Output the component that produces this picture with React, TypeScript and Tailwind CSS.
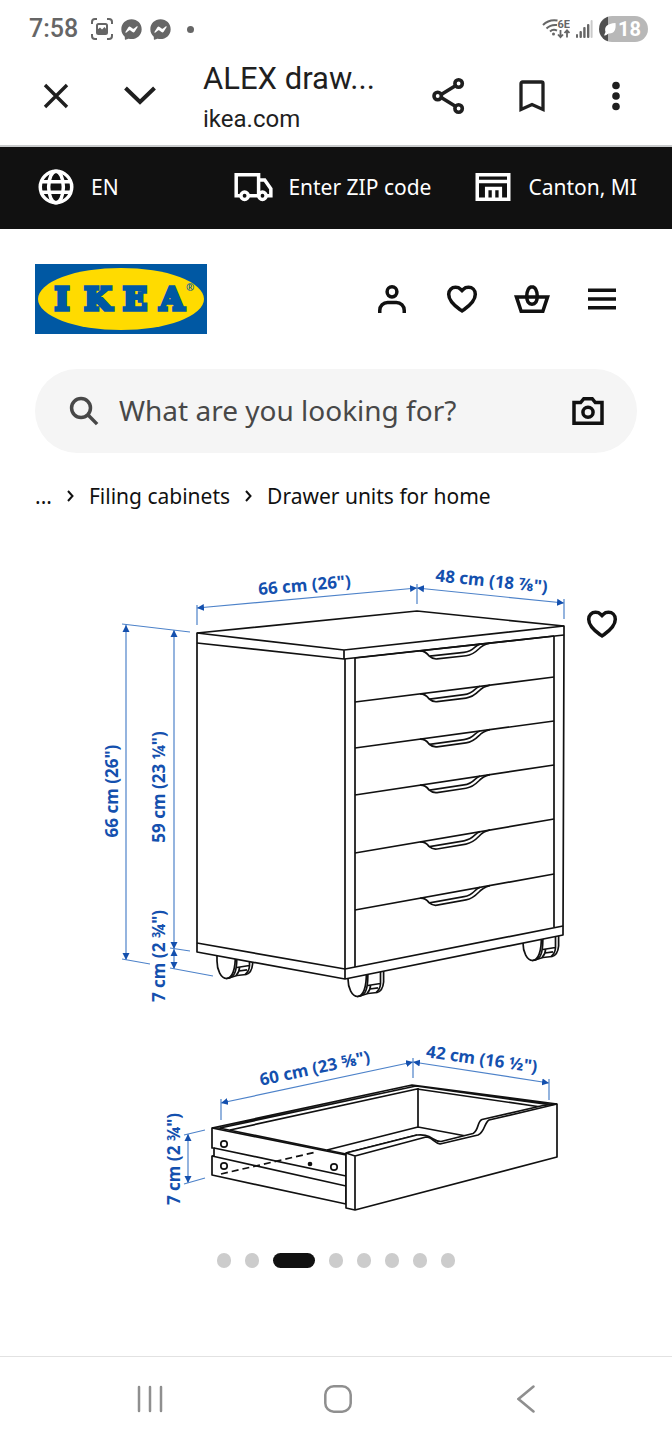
import type { ReactNode } from 'react';
import { FaFacebookMessenger } from 'react-icons/fa';

interface IconProps {
  children: ReactNode;
  className?: string;
}

interface Point {
  x: number;
  y: number;
}

const drawerRows = [
  { left: 658, right: 636 },
  { left: 702, right: 677 },
  { left: 748, right: 721 },
  { left: 795, right: 765 },
  { left: 853, right: 819 },
  { left: 910, right: 874 },
];

const slides = [1, 2, 3, 4, 5, 6, 7, 8];
const activeSlide = 3;

function Icon({ children, className = 'size-[42px]' }: IconProps) {
  return (
    <svg
      viewBox="0 0 24 24"
      className={className}
      fill="none"
      stroke="currentColor"
      strokeWidth="2"
      aria-hidden="true"
    >
      {children}
    </svg>
  );
}

function HeartIcon() {
  return (
    <Icon>
      <path d="M12 18.800l-1.200-.8C7.400 15.600 4.400 12.700 4.400 9.300c0-2.400 1.700-4 3.900-4 1.200 0 2.200.4 2.900 1.100l.8.800.8-.8c.7-.7 1.700-1.100 2.900-1.100 2.200 0 3.900 1.600 3.900 4 0 3.400-3 6.300-6.400 8.700z" />
    </Icon>
  );
}

function StatusBar() {
  return (
    <div className="flex h-[54px] items-center pt-1 pr-6 pl-[29px] text-[#666]">
      <span className="text-[25px] leading-7 font-medium">7:58</span>
      <svg viewBox="0 0 22 22" className="ml-[13px] size-[22px]" fill="none" stroke="currentColor" strokeWidth="2">
        <path d="M1 6V4a3 3 0 0 1 3-3h2M16 1h2a3 3 0 0 1 3 3v2M21 16v2a3 3 0 0 1-3 3h-2M6 21H4a3 3 0 0 1-3-3v-2" />
        <rect x="6" y="6" width="10" height="10" rx="1.500" />
        <path d="M6 15v-3l3-2.500 2 2L13.500 9l2.500 3v3z" fill="currentColor" stroke="none" />
      </svg>
      <FaFacebookMessenger className="ml-2 size-[21px]" />
      <FaFacebookMessenger className="ml-2 size-[21px]" />
      <span className="ml-4 size-[7px] rounded-full bg-[#666]" />
      <div className="ml-auto flex items-center gap-[6px]">
        <svg viewBox="0 0 28 22" className="h-[22px] w-[28px]" fill="none" stroke="currentColor" strokeWidth="2">
          <path d="M1 7C4.500 3.500 10 1.500 15.500 2.500" />
          <path d="M4.500 10.500C7.500 7.500 11 6.500 15 7" />
          <path d="M8 13.500c2-1.800 4.500-2.200 7-.9" />
          <circle cx="11.500" cy="16" r="1.500" fill="currentColor" stroke="none" />
          <text x="15.500" y="10" fontSize="11" fontWeight="700" fill="currentColor" stroke="none">
            6E
          </text>
          <path d="M18.500 12v7M16 16.500l2.500 2.700 2.500-2.700M25 19.500v-7M22.500 15l2.500-2.700 2.500 2.700" strokeWidth="1.800" />
        </svg>
        <svg viewBox="0 0 17 18" className="h-[18px] w-[17px]" fill="currentColor">
          <rect x="0" y="14" width="2" height="4" rx="1" />
          <rect x="3.500" y="11" width="2.400" height="7" rx="1" />
          <rect x="7.200" y="7" width="2.400" height="11" rx="1" />
          <rect x="11" y="4" width="2.400" height="14" rx="1" />
          <rect x="14.600" y="0" width="2" height="18" rx="1" opacity=".35" />
        </svg>
        <div className="flex h-[26px] w-[49px] items-center overflow-hidden rounded-full bg-[linear-gradient(90deg,#505050_9px,#b8b8b8_9px)] pl-1 text-white">
          <svg viewBox="0 0 14 14" className="size-[14px]" fill="currentColor">
            <path d="M2.500 10C1 5 4 1.500 12.500 1c.8 7-1.500 11-7 10.500L3 13.200l-2 .3z" />
          </svg>
          <span className="ml-px text-xl leading-6 font-bold">18</span>
        </div>
      </div>
    </div>
  );
}

function BrowserBar() {
  return (
    <div className="flex h-[93px] items-center border-b-2 border-[#c9cbcc] px-[14px] pb-2 text-[#1f1f1f]">
      <button type="button" aria-label="Close" className="flex w-[84px] justify-center">
        <svg viewBox="0 0 26 26" className="size-[26px]" fill="none" stroke="currentColor" strokeWidth="3.400">
          <path d="M2 2l22 22M24 2L2 24" />
        </svg>
      </button>
      <button type="button" aria-label="Minimize" className="flex w-[84px] justify-center">
        <svg viewBox="0 0 32 20" className="h-5 w-8" fill="none" stroke="currentColor" strokeWidth="4">
          <path d="M1.500 2L16 16 30.500 2" />
        </svg>
      </button>
      <div className="mt-[6px] ml-[21px] flex-1 whitespace-nowrap">
        <p className="text-[31px] leading-10">ALEX draw...</p>
        <p className="text-[24px] leading-10">ikea.com</p>
      </div>
      <button type="button" aria-label="Share" className="flex w-[84px] justify-center">
        <svg viewBox="0 0 36 38" className="h-[38px] w-[36px]" fill="none" stroke="currentColor" strokeWidth="3.600">
          <path d="M12 17L25 9M12 21l13 8" />
          <circle cx="7.700" cy="19" r="3.700" />
          <circle cx="28.600" cy="6.500" r="3.700" />
          <circle cx="28.600" cy="31.500" r="3.700" />
        </svg>
      </button>
      <button type="button" aria-label="Bookmark" className="flex w-[84px] justify-center">
        <svg viewBox="0 0 26 34" className="h-[34px] w-[26px]" fill="none" stroke="currentColor" strokeWidth="3.300">
          <path d="M2 30.500V4.500A1.500 1.500 0 0 1 3.500 3h19A1.500 1.500 0 0 1 24 4.500v26l-11-5z" />
        </svg>
      </button>
      <button type="button" aria-label="More options" className="flex w-[84px] justify-center">
        <svg viewBox="0 0 8 30" className="h-[30px] w-2" fill="currentColor">
          <circle cx="4" cy="4.500" r="3.800" />
          <circle cx="4" cy="15" r="3.800" />
          <circle cx="4" cy="25.500" r="3.800" />
        </svg>
      </button>
    </div>
  );
}

function UtilityBar() {
  return (
    <div className="flex h-[82px] items-center gap-[41px] bg-[#111] px-[35px] pb-[2px] text-[21px] leading-8 whitespace-nowrap text-white">
      <button type="button" className="flex items-center gap-[14px]">
        <Icon>
          <circle cx="12" cy="12" r="9" />
          <path d="M3.500 9h17M3.500 15h17" />
          <ellipse cx="12" cy="12" rx="4.200" ry="9" />
        </Icon>
        EN
      </button>
      <button type="button" className="ml-auto flex items-center gap-[14px]">
        <Icon>
          <path d="M4.500 17H2.400V5h12.800v12H9.500M15.200 8h3.500l3.500 5v4h-2.500" />
          <circle cx="7.200" cy="17" r="2.100" />
          <circle cx="17.400" cy="17" r="2.100" />
        </Icon>
        Enter ZIP code
      </button>
      <button type="button" className="flex items-center gap-[14px]">
        <Icon>
          <path d="M3 5h18v14H3zM3 8.800h18" />
          <path d="M8.400 19v-6.200h7.800V19M12.300 13v6" />
        </Icon>
        Canton, MI
      </button>
    </div>
  );
}

function SiteHeader() {
  return (
    <header className="flex items-center justify-between px-[35px] pt-[35px] text-[#111]">
      <a href="#home" aria-label="IKEA">
        <svg viewBox="0 0 172 70" className="h-[70px] w-[172px]">
          <rect width="172" height="70" fill="#0058a3" />
          <ellipse cx="86" cy="35" rx="83" ry="31" fill="#ffdb00" />
          <text
            x="27 63 100 137"
            y="46"
            textAnchor="middle"
            fontFamily="DejaVu Serif"
            fontWeight="700"
            fontSize="32"
            fill="#0058a3"
            stroke="#0058a3"
            strokeWidth="3.500"
          >
            IKEA
          </text>
          <text x="151" y="27" fontFamily="Noto Sans" fontWeight="700" fontSize="10" fill="#0058a3">
            ®
          </text>
        </svg>
      </a>
      <div className="flex">
        <button type="button" aria-label="Account" className="flex w-[70px] justify-center">
          <Icon>
            <ellipse cx="12" cy="7.900" rx="2.800" ry="2.900" />
            <path d="M5 20v-1.500A4.500 4.500 0 0 1 9.500 14h5a4.500 4.500 0 0 1 4.500 4.500V20" />
          </Icon>
        </button>
        <button type="button" aria-label="Favorites" className="flex w-[70px] justify-center">
          <HeartIcon />
        </button>
        <button type="button" aria-label="Shopping bag" className="flex w-[70px] justify-center">
          <Icon>
            <path d="M3.100 10.800h17.800L18.200 19H5.800z" />
            <path d="M12 5c-1.800 0-3 2.400-3 5.300 0 3 1.200 4.700 3 4.700s3-1.700 3-4.700C15 7.400 13.800 5 12 5z" />
          </Icon>
        </button>
        <button type="button" aria-label="Menu" className="flex w-[70px] justify-center">
          <Icon>
            <path d="M4 7h16M4 12h16M4 17h16" />
          </Icon>
        </button>
      </div>
    </header>
  );
}

function SearchBox() {
  return (
    <form className="mx-[35px] mt-[35px] flex h-[84px] items-center rounded-full bg-[#f5f5f5] px-7">
      <span className="text-[#484848]">
        <Icon>
          <circle cx="10.300" cy="10.300" r="5.400" />
          <path d="M14.200 14.200l5.300 5.300" />
        </Icon>
      </span>
      <input
        type="search"
        aria-label="Search"
        placeholder="What are you looking for?"
        className="ml-[14px] min-w-0 flex-1 bg-transparent pb-[2px] text-[28px] leading-10 outline-none placeholder:text-[#484848]"
      />
      <button type="button" aria-label="Search by image" className="text-[#111]">
        <Icon>
          <path d="M4 7.200h3.800L9.600 5h4.800l1.800 2.200H20V19H4z" />
          <circle cx="12" cy="12.700" r="2.900" />
        </Icon>
      </button>
    </form>
  );
}

function Separator() {
  return (
    <svg viewBox="0 0 7 12" className="h-3 w-[7px]" fill="none" stroke="currentColor" strokeWidth="2">
      <path d="M1 1l4.500 5L1 11" />
    </svg>
  );
}

function Breadcrumbs() {
  return (
    <nav aria-label="Breadcrumb" className="mx-[35px] mt-[27px] flex h-8 items-center gap-[15px] text-[21px] leading-8 whitespace-nowrap">
      <a href="#all">...</a>
      <Separator />
      <a href="#filing">Filing cabinets</a>
      <Separator />
      <a href="#drawers">Drawer units for home</a>
    </nav>
  );
}

function Dimension({ from, to }: { from: Point; to: Point }) {
  return (
    <line x1={from.x} y1={from.y} x2={to.x} y2={to.y} markerStart="url(#arrow)" markerEnd="url(#arrow)" />
  );
}

function Label({ x, y, angle, children }: Point & { angle: number; children: string }) {
  return (
    <text transform={`translate(${x} ${y}) rotate(${angle})`} textAnchor="middle">
      {children}
    </text>
  );
}

// Origin is the top left of the big wheel, the part above it hides behind the base
function Caster({ x, y }: Point) {
  return (
    <g transform={`translate(${x} ${y})`}>
      <path d="M35.600-10V3c-.5 5.500-3 9.500-6.500 10.500L20 14.500l-6.500 2-4 1L17-8z" fill="#fff" />
      <path d="M19.800 6.500l12.700-2V-9M32.500 4.500c0 4-2 7-4.500 9.200M22.500 6.500c0 3.500-1 5.500-3.500 8M22 10l8-1.200" />
      <path d="M0-6v6c0 9 4 17.500 9.500 17.500S18.800 9 18.300-8" fill="#fff" />
      <path d="M9.500 17.500l4-1c5-2 6.700-9 6.300-26" />
    </g>
  );
}

function Cabinet() {
  return (
    <g>
      <Caster x={217} y={961} />
      <Caster x={348} y={979} />
      <Caster x={523} y={943} />
      <path d="M197 633l220-22 147 15v9l-1 300-218 44-148-27z" fill="#fff" />
      <path d="M197 633l147 17 220-24M197 643l147 16 220-24M344 650v9M197 943l148 26 218-43" />
      <path d="M345 659v320M355 658v309M554 636v291" />
      {drawerRows.map(({ left, right }) => {
        const slope = (left - right) / 199;
        return (
          <g key={left}>
            <path d={`M355 ${left}L554 ${right}`} />
            <g transform={`matrix(1 ${-slope} 0 1 420 ${left - slope * 65})`}>
              <path d="M0 0c5 .5 7 3 9 6 3 3 5 4 8 4h29c6 0 9-2 13-5.500 3-3 5-4 11-4.500" />
              <path d="M9.500 6.400H44c5 0 8-1.500 11-4 2-1.500 3-2.100 5-2.400" />
            </g>
          </g>
        );
      })}
    </g>
  );
}

function Drawer() {
  return (
    <g>
      {/* back rails and floor */}
      <path d="M212 1128l200-43 145 19M220 1128l196-42 136 19M230 1130l187-41 124 18" />
      <path d="M418 1088v39l-91 23M418 1127l48 9M346 1153l71-18" />
      {/* side panel */}
      <path d="M212 1128v20h2v8h-2v19l134 29v-49z" fill="#fff" />
      <path d="M212 1128l7 0 127 26M214 1148l132 28M212 1156l134 30" />
      <circle cx="224" cy="1144" r="3.200" />
      <circle cx="224" cy="1166" r="3.200" />
      <circle cx="334" cy="1167" r="3.200" />
      <circle cx="310" cy="1164" r="1.500" fill="#111" />
      <path d="M221 1174l95-22" strokeDasharray="7 4" />
      {/* front panel with the cut-out grip */}
      <path
        d="M346 1153l71-18c5-.5 9 0 12 1.500 5 2.500 7 5 12 5l32-8c6-3 4-12 9-14l61-14 14-1.500v53l-202 53-9-2z"
        fill="#fff"
      />
      <path d="M346 1153l9 3v54M355 1156l71-19c6 0 8 6 14 7l38-9c7-3 6-12 11-15l68-16" />
    </g>
  );
}

function Gallery() {
  return (
    <section aria-label="Product images">
      <div className="relative mx-[35px] mt-[15px]">
        <svg viewBox="35 527 602 705" className="block w-full" role="img" aria-label="Measurements of the drawer unit">
          <defs>
            <marker
              id="arrow"
              viewBox="0 0 7 8"
              refX="7"
              refY="4"
              markerWidth="7"
              markerHeight="8"
              markerUnits="userSpaceOnUse"
              orient="auto-start-reverse"
            >
              <path d="M0 .5L7 4 0 7.500z" fill="#1450ae" />
            </marker>
          </defs>
          <g fill="none" stroke="#111" strokeWidth="1.700" strokeLinejoin="round">
            <Cabinet />
            <Drawer />
          </g>
          <g stroke="#4d82c9" strokeWidth="1.200">
            <Dimension from={{ x: 197, y: 608 }} to={{ x: 417, y: 588 }} />
            <Dimension from={{ x: 417, y: 588 }} to={{ x: 564, y: 603 }} />
            <Dimension from={{ x: 126, y: 625 }} to={{ x: 126, y: 960 }} />
            <Dimension from={{ x: 174, y: 630 }} to={{ x: 174, y: 949 }} />
            <Dimension from={{ x: 174, y: 949 }} to={{ x: 174, y: 969 }} />
            <Dimension from={{ x: 221, y: 1103 }} to={{ x: 413, y: 1062 }} />
            <Dimension from={{ x: 413, y: 1062 }} to={{ x: 549, y: 1083 }} />
            <Dimension from={{ x: 188, y: 1134 }} to={{ x: 188, y: 1183 }} />
            <path d="M197 605v20M417 584v20M564 599v20M122 624l68 8M122 959l28 5M170 948l20 3M170 968l43 8" />
            <path d="M221 1099v21M413 1058v20M549 1079v21M184 1135l21-5M184 1184l21-6" />
          </g>
          <g fill="#1450ae" fontFamily="Noto Sans" fontWeight="700" fontSize="17">
            <Label x={305} y={591} angle={-5}>{'66 cm (26")'}</Label>
            <Label x={491} y={587} angle={6}>{'48 cm (18 ⅞")'}</Label>
            <Label x={118} y={791} angle={-90}>{'66 cm (26")'}</Label>
            <Label x={165} y={787} angle={-90}>{'59 cm (23 ¼")'}</Label>
            <Label x={165} y={956} angle={-90}>{'7 cm (2 ¾")'}</Label>
            <Label x={316} y={1074} angle={-12}>{'60 cm (23 ⅝")'}</Label>
            <Label x={481} y={1065} angle={8}>{'42 cm (16 ½")'}</Label>
            <Label x={180} y={1159} angle={-90}>{'7 cm (2 ¾")'}</Label>
          </g>
        </svg>
        <button type="button" aria-label="Save to favorites" className="absolute top-[76px] right-[14px] text-[#111]">
          <HeartIcon />
        </button>
      </div>
      <div className="mt-[21px] flex justify-center gap-[14px]">
        {slides.map((slide) => (
          <button
            key={slide}
            type="button"
            aria-label={`Image ${slide}`}
            className={
              slide === activeSlide
                ? 'h-[15px] w-[42px] rounded-full bg-[#111]'
                : 'h-[15px] w-[14px] rounded-full bg-[#ccc]'
            }
          />
        ))}
      </div>
    </section>
  );
}

function SystemNav() {
  return (
    <nav
      aria-label="System"
      className="mt-auto flex h-[84px] items-center border-t border-[#e2e2e2] pr-[52px] pl-[56px] text-[#8f8f8f]"
    >
      <button type="button" aria-label="Recent apps" className="flex flex-1 justify-center">
        <svg viewBox="0 0 28 28" className="size-7" fill="none" stroke="currentColor" strokeWidth="2.500" strokeLinecap="round">
          <path d="M3 2v24M14 2v24M25 2v24" />
        </svg>
      </button>
      <button type="button" aria-label="Home" className="flex flex-1 justify-center">
        <svg viewBox="0 0 28 28" className="size-7" fill="none" stroke="currentColor" strokeWidth="2.500">
          <rect x="1.300" y="1.300" width="25.400" height="25.400" rx="8.500" />
        </svg>
      </button>
      <button type="button" aria-label="Back" className="flex flex-1 justify-center">
        <svg viewBox="0 0 18 28" className="h-7 w-[18px]" fill="none" stroke="currentColor" strokeWidth="2.500" strokeLinecap="round">
          <path d="M16.500 1.500L1.500 14l15 12.500" />
        </svg>
      </button>
    </nav>
  );
}

export default function App() {
  return (
    <div className="flex min-h-screen flex-col bg-white">
      <div className="font-[Roboto,sans-serif]">
        <StatusBar />
        <BrowserBar />
      </div>
      <main className="font-['Noto_Sans',sans-serif] text-[#111]">
        <UtilityBar />
        <SiteHeader />
        <SearchBox />
        <Breadcrumbs />
        <Gallery />
      </main>
      <SystemNav />
    </div>
  );
}
